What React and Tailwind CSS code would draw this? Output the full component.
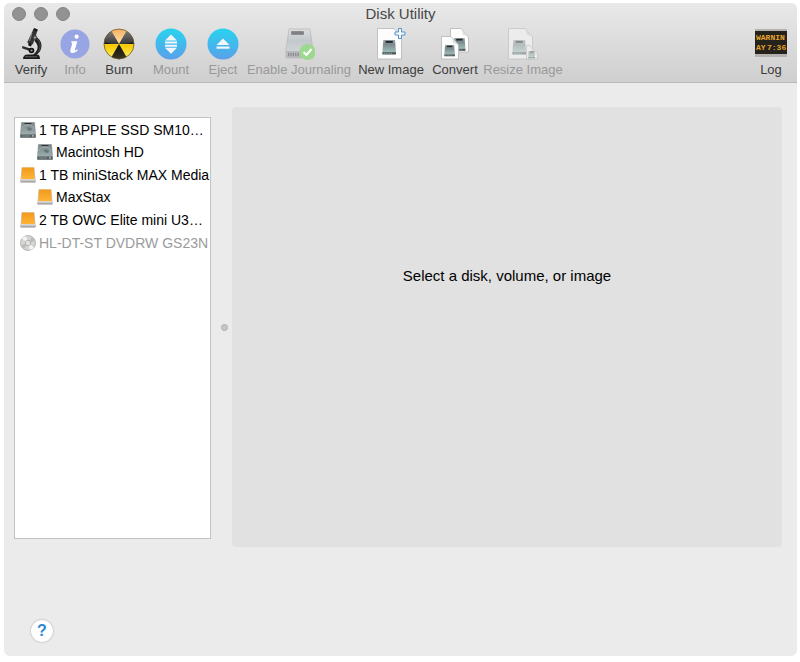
import clsx from 'clsx';

const VerifyIcon = () => (
  <svg width="32" height="32" viewBox="0 0 32 32">
    <path d="M18.5 1l4 1.600-4.700 14-5.600-2z" fill="#333" />
    <path d="M19 0l3.800 1.400-.6 1.800-3.800-1.400z" fill="#111" />
    <path d="M17 5l-2.500 8" stroke="#8b8b8b" strokeWidth="1" />
    <path d="M13.500 14.500l3.500 1.300-1 2.700-2.700-1z" fill="#111" />
    <path d="M20 8.500c8 3 9 14 1 18.500l-5 1c7-4 9-10 3.500-15z" fill="#1e1e1e" />
    <path d="M22 11c4 4 4 9 1 13" fill="none" stroke="#666" strokeWidth=".7" />
    <path d="M7.500 18l11.500 3.800-.8 2.400L7 20.200z" fill="#2b2b2b" />
    <circle cx="20" cy="9.500" r="2.200" fill="#4a4a4a" />
    <circle cx="20" cy="9.500" r=".9" fill="#bbb" />
    <circle cx="16.500" cy="22.500" r="2.800" fill="#111" />
    <circle cx="16.500" cy="22.500" r="1.100" fill="#999" />
    <path d="M8 31c0-3 2-5 6-4.500h8c2 0 3 2 3 4.500z" fill="#1a1a1a" />
    <path d="M10 28.800h12" stroke="#777" strokeWidth=".8" />
  </svg>
);

const InfoIcon = () => (
  <svg width="32" height="32" viewBox="0 0 32 32">
    <circle cx="16" cy="16" r="14.5" fill="#98a5e4" />
    <circle cx="17.6" cy="8.7" r="2.1" fill="#fff" />
    <path d="M12.5 13.3h5.8l-2.4 8.4c-.3 1.2.6 1.2 2.3-.4l.7.8c-2 2.3-3.7 3-5.3 3-2 0-2.7-1.2-2.2-3l1.8-6.4c.2-.9-.1-1.2-1.3-1.2z" fill="#fff" />
  </svg>
);

const BurnIcon = () => (
  <svg width="32" height="32" viewBox="0 0 32 32">
    <defs>
      <linearGradient id="burn" x1="0" y1="0" x2="0" y2="1">
        <stop offset="0" stopColor="#f6a348" />
        <stop offset=".4" stopColor="#fbd28c" />
        <stop offset=".55" stopColor="#f4c900" />
        <stop offset="1" stopColor="#fff06a" />
      </linearGradient>
      <linearGradient id="burnDark" x1="0" y1="0" x2="0" y2="1">
        <stop offset="0" stopColor="#666" />
        <stop offset=".5" stopColor="#111" />
        <stop offset="1" stopColor="#3a3520" />
      </linearGradient>
    </defs>
    <circle cx="16" cy="16" r="15" fill="url(#burn)" />
    <path d="M16 16H1A15 15 0 0 1 8.5 3zM16 16h15A15 15 0 0 0 23.5 3zM16 16L8.5 29a15 15 0 0 0 15 0z" fill="url(#burnDark)" />
    <path d="M2 14a14 14 0 0 1 28 0c-8 3-20 3-28 0z" fill="#fff" opacity=".14" />
    <circle cx="16" cy="16" r="15" fill="none" stroke="#6b5b2c" strokeWidth=".8" />
  </svg>
);

const BlueDisc = ({ id, children }) => (
  <svg width="32" height="32" viewBox="0 0 32 32">
    <defs>
      <linearGradient id={id} x1="0" y1="0" x2="0" y2="1">
        <stop offset="0" stopColor="#28d3ee" />
        <stop offset="1" stopColor="#5aa0ea" />
      </linearGradient>
    </defs>
    <circle cx="16" cy="16" r="15.5" fill={`url(#${id})`} />
    <g fill="#f2f6fa">{children}</g>
  </svg>
);

const MountIcon = () => (
  <BlueDisc id="mount">
    <path d="M16 6.5l6 6H10zM10 13.500h12v2H10zM10 16.700h12v2H10zM10 19.700h12l-6 6z" />
  </BlueDisc>
);

const EjectIcon = () => (
  <BlueDisc id="eject">
    <path d="M16 10.5l6.5 6.5h-13zM9.5 18.5h13v2.2h-13z" />
  </BlueDisc>
);

// Hard drive seen from above, used inside the document icons
const Drive = ({ id }) => (
  <g>
    <defs>
      <linearGradient id={id} x1="0" y1="0" x2="0" y2="1">
        <stop offset="0" stopColor="#9aa6a8" />
        <stop offset=".3" stopColor="#7b8a8e" />
        <stop offset="1" stopColor="#a9cdc5" />
      </linearGradient>
    </defs>
    <path d="M1.500 0h13l1 13v3H.5v-3z" fill={`url(#${id})`} />
    <rect x="4" y="1" width="8" height="2.200" fill="#22282a" />
    <rect x=".5" y="13.500" width="15" height="2.500" fill="#4d5759" />
    <path d="M2 14.700h9" stroke="#b5bdbd" strokeDasharray="1 1" />
  </g>
);

const JournalIcon = () => (
  <svg width="32" height="32" viewBox="0 0 32 32">
    <defs>
      <linearGradient id="journal" x1="0" y1="0" x2="0" y2="1">
        <stop offset="0" stopColor="#dedede" />
        <stop offset=".4" stopColor="#c3c8cb" />
        <stop offset="1" stopColor="#d6dcdd" />
      </linearGradient>
    </defs>
    <path d="M6 1h21l3 21v8H3v-8z" fill="url(#journal)" stroke="#b4b6b8" strokeWidth=".7" />
    <path d="M3 23h27v7H3z" fill="#b9bbbc" />
    <rect x="8" y="3" width="13" height="4" rx="1" fill="#8a8c8e" />
    <path d="M9 5h11" stroke="#6f7173" strokeWidth=".8" />
    <path d="M5 26.500h12" stroke="#85878a" strokeWidth="3.500" strokeDasharray="1.200 1.200" />
    <circle cx="24.500" cy="24" r="8" fill="#9bd98f" />
    <path d="M20.500 24l3 3 5-6" fill="none" stroke="#fff" strokeWidth="2" />
  </svg>
);

const Page = ({ x = 0, y = 0, w = 25, h = 31, faded = false }) => (
  <g transform={`translate(${x} ${y})`}>
    <path
      d={`M.5.500H${w - 8}L${w - 0.5} 9V${h}H.5z`}
      fill={faded ? '#ececec' : '#fdfdfd'}
      stroke={faded ? '#c4c4c4' : '#b5b5b5'}
      strokeWidth=".8"
    />
    <path d={`M${w - 8} .500Q${w - 6} 5 ${w - 6} 7Q${w - 3} 7 ${w - 0.5} 9z`} fill={faded ? '#dadada' : '#dfe1e1'} />
  </g>
);

const NewImageIcon = () => (
  <svg width="32" height="32" viewBox="0 0 32 32">
    <Page x={2} />
    <g transform="translate(7 12) scale(.9)"><Drive id="newDrive" /></g>
    <path d="M23.500 .500h3v3.500H30v3h-3.500v3.500h-3V7H20V4h3.500z" fill="#f3faff" stroke="#5b92c5" />
  </svg>
);

const ConvertIcon = () => (
  <svg width="32" height="32" viewBox="0 0 32 32">
    <Page x={11} y={0} w={19} h={24} />
    <g transform="translate(14 10) scale(.8)"><Drive id="backDrive" /></g>
    <Page x={2} y={8} w={18} h={23} />
    <g transform="translate(5 17) scale(.7)"><Drive id="frontDrive" /></g>
  </svg>
);

const ResizeIcon = () => (
  <svg width="32" height="32" viewBox="0 0 32 32">
    <Page x={1} faded />
    <g transform="translate(5 12) scale(.9)" opacity=".5"><Drive id="largeDrive" /></g>
    <Page x={19} y={17} w={12} h={14} faded />
    <g transform="translate(21 23) scale(.45)" opacity=".5"><Drive id="smallDrive" /></g>
  </svg>
);

const LogIcon = () => (
  <svg width="32" height="32" viewBox="0 0 32 32">
    <rect x="0" y="1" width="32" height="28" fill="#b3b2ae" />
    <rect x="0" y="3" width="32" height="23" fill="#25221b" />
    <g fill="#e5a52c" fontFamily="Liberation Mono" fontWeight="bold" fontSize="8">
      <text x="1" y="12">WARNIN</text>
      <text x="1" y="22">AY</text>
      <text x="12" y="22">7:36</text>
    </g>
  </svg>
);

const DriveIcon = () => (
  <svg width="16" height="16" viewBox="0 0 16 16" className="shrink-0">
    <defs>
      <linearGradient id="drive" x1="0" y1="0" x2="0" y2="1">
        <stop offset="0" stopColor="#7c8486" />
        <stop offset=".4" stopColor="#8b999c" />
        <stop offset="1" stopColor="#a5bab8" />
      </linearGradient>
    </defs>
    <path d="M1.500 .5h13l1 11.500v3.500H.5V12z" fill="url(#drive)" stroke="#747d7f" strokeWidth=".5" />
    <path d="M4.500 1.500h7" stroke="#2d3335" />
    <path d="M2 7a6 4 0 0 1 12 0" fill="none" stroke="#aeb8ba" strokeWidth=".7" />
    <path d="M8 5l4 1.500-1 2.500-4-1z" fill="#68777a" />
    <rect x=".5" y="12.500" width="15" height="3" fill="#525b5d" />
    <path d="M2.500 14h7" stroke="#c0c8c9" strokeDasharray="1 1" />
    <rect x="12" y="13.300" width="2" height="1.200" fill="#c6cccc" />
  </svg>
);

const ExternalIcon = () => (
  <svg width="16" height="16" viewBox="0 0 16 16" className="shrink-0">
    <defs>
      <linearGradient id="orange" x1="0" y1="0" x2="0" y2="1">
        <stop offset="0" stopColor="#f09a1c" />
        <stop offset="1" stopColor="#ffb335" />
      </linearGradient>
    </defs>
    <path d="M1.500 .5h13l1 12v3H.5v-3z" fill="#c9c5c0" />
    <path d="M2 .500h12l.7 11.500H1.300z" fill="url(#orange)" />
    <path d="M.5 13h15v2.500H.5z" fill="#aaa9aa" />
    <path d="M1 13h14" stroke="#e8e6e3" />
  </svg>
);

const DiscIcon = () => (
  <svg width="16" height="16" viewBox="0 0 16 16" className="shrink-0">
    <circle cx="8" cy="8" r="7.500" fill="#d6d6d2" stroke="#aaa" strokeWidth=".8" />
    <path d="M8 8L2 3.500A7.500 7.500 0 0 1 6 1zM8 8l6 4.500A7.500 7.500 0 0 1 10 15z" fill="#f5f5f5" />
    <path d="M8 8L1 10a7.500 7.500 0 0 0 3 4zM8 8l7-2a7.500 7.500 0 0 0-3-4z" fill="#bdbeb9" />
    <circle cx="8" cy="8" r="2.800" fill="#e6e6e6" stroke="#999" strokeWidth=".6" />
    <circle cx="8" cy="8" r="1.200" fill="#fff" stroke="#aaa" strokeWidth=".4" />
  </svg>
);

const tools = [
  { label: 'Verify', icon: VerifyIcon, width: 'w-10' },
  { label: 'Info', icon: InfoIcon, width: 'w-12', disabled: true },
  { label: 'Burn', icon: BurnIcon, width: 'w-10' },
  { label: 'Mount', icon: MountIcon, width: 'w-16', disabled: true },
  { label: 'Eject', icon: EjectIcon, width: 'w-10', disabled: true },
  { label: 'Enable Journaling', icon: JournalIcon, width: 'w-28', disabled: true },
  { label: 'New Image', icon: NewImageIcon, width: 'w-18' },
  { label: 'Convert', icon: ConvertIcon, width: 'w-14' },
  { label: 'Resize Image', icon: ResizeIcon, width: 'w-20', disabled: true },
];

const disks = [
  { name: '1 TB APPLE SSD SM10…', icon: DriveIcon, volumes: ['Macintosh HD'] },
  { name: '1 TB miniStack MAX Media', icon: ExternalIcon, volumes: ['MaxStax'] },
  { name: '2 TB OWC Elite mini U3…', icon: ExternalIcon, volumes: [] },
  { name: 'HL-DT-ST DVDRW GS23N', icon: DiscIcon, volumes: [], dimmed: true },
];

function ToolButton({ label, icon: Icon, width, disabled }) {
  return (
    <button
      type="button"
      disabled={disabled}
      className={clsx(
        'flex shrink-0 flex-col items-center text-[13px] leading-4 whitespace-nowrap',
        width,
        disabled ? 'text-[#999999]' : 'text-[#3c3c3c]'
      )}
    >
      <Icon />
      <span className="mt-0.5">{label}</span>
    </button>
  );
}

export default function App() {
  return (
    <div className="flex min-h-screen flex-col bg-white pt-[3px] pr-[3px] pb-[6px] pl-1 font-['Liberation_Sans',Arial,sans-serif] text-black">
      <div className="flex flex-1 flex-col overflow-hidden rounded-md bg-[#ebebeb]">
        <header className="border-b border-[#b9b9b9] bg-linear-to-b from-[#e9e9e9] to-[#cfcfcf] pb-1">
          <div className="grid grid-cols-[1fr_auto_1fr] items-center">
            <div className="flex gap-2 pl-2">
              <button type="button" aria-label="Close" className="size-3.5 rounded-full border border-[#858585] bg-[#929292]" />
              <button type="button" aria-label="Minimize" className="size-3.5 rounded-full border border-[#858585] bg-[#929292]" />
              <button type="button" aria-label="Zoom" className="size-3.5 rounded-full border border-[#858585] bg-[#929292]" />
            </div>
            <h1 className="text-[15px] leading-[21px] text-[#484848]">Disk Utility</h1>
          </div>
          <div className="mt-1 flex justify-between pr-1.5 pl-[7px]">
            <div className="flex">
              {tools.map((tool) => (
                <ToolButton key={tool.label} {...tool} />
              ))}
            </div>
            <ToolButton label="Log" icon={LogIcon} width="w-10" />
          </div>
        </header>

        <main className="flex flex-1 pt-6 pr-[15px] pl-2.5">
          <ul className="mt-2.5 mb-2 w-[197px] shrink-0 border border-[#c3c3c3] bg-white text-sm">
            {disks.map(({ name, icon: Icon, volumes, dimmed }) => (
              <li key={name}>
                <button
                  type="button"
                  className={clsx(
                    'flex h-[23px] w-full items-center gap-[3px] pl-[5px] whitespace-nowrap',
                    dimmed && 'text-[#9b9b9b]'
                  )}
                >
                  <Icon />
                  {name}
                </button>
                {volumes.length > 0 && (
                  <ul>
                    {volumes.map((volume) => (
                      <li key={volume}>
                        <button type="button" className="flex h-[22px] w-full items-center gap-[3px] pl-[22px] whitespace-nowrap">
                          <Icon />
                          {volume}
                        </button>
                      </li>
                    ))}
                  </ul>
                )}
              </li>
            ))}
          </ul>

          {/* Splitter handle */}
          <div className="flex w-[21px] shrink-0 items-center justify-end pr-1">
            <span className="size-[7px] rounded-full border border-[#b0b0b0] bg-[#c6c6c6]" />
          </div>

          <section className="flex-1 rounded-sm bg-[#e1e1e1] pt-[158px] text-center text-[15px] leading-[21px]">
            Select a disk, volume, or image
          </section>
        </main>

        <footer className="pt-[73px] pb-3.5 pl-[27px]">
          <button
            type="button"
            aria-label="Help"
            className="flex size-[22px] items-center justify-center rounded-full bg-white text-base font-bold text-[#2d87cf] shadow-[0_0_2px_rgba(0,0,0,0.35)]"
          >
            ?
          </button>
        </footer>
      </div>
    </div>
  );
}
